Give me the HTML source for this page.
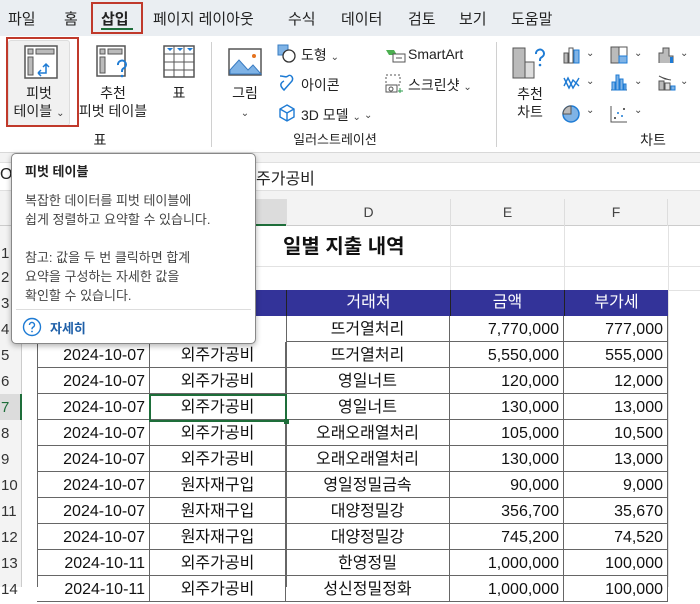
<!DOCTYPE html>
<html><head><meta charset="utf-8"><style>
*{box-sizing:border-box;margin:0;padding:0}
body{width:700px;height:587px;overflow:hidden;background:#fff;font-family:"Liberation Sans","Noto Sans CJK KR",sans-serif;position:relative;color:#222}
.a{position:absolute}
.tab{position:absolute;top:8px;font-size:15px;color:#222}
.rl{font-size:14px;color:#222;text-align:center;line-height:18px}
.rn{position:absolute;left:0;width:22px;font-size:15px;color:#333;text-align:left;padding-left:1px}
.c{position:absolute;font-size:16px;color:#111;white-space:nowrap;height:26px;line-height:28px;border-right:1px solid #666;border-bottom:1px solid #666}
.r{text-align:right;padding-right:4px}.m{text-align:center}
.dd{font-size:10px;color:#444}
</style></head><body>
<div class="a" style="left:0;top:0;width:700px;height:36px;background:#eaeef2"></div>
<div class="tab" style="left:8px">파일</div>
<div class="tab" style="left:64px">홈</div>
<div class="tab" style="left:101px;font-weight:bold">삽입</div>
<div class="a" style="left:91px;top:2px;width:52px;height:32px;border:2px solid #c0392b"></div>
<div class="a" style="left:101px;top:28px;width:32px;height:2px;background:#1e6e3a"></div>
<div class="tab" style="left:153px">페이지 레이아웃</div>
<div class="tab" style="left:288px">수식</div>
<div class="tab" style="left:341px">데이터</div>
<div class="tab" style="left:408px">검토</div>
<div class="tab" style="left:459px">보기</div>
<div class="tab" style="left:511px">도움말</div>
<div class="a" style="left:0;top:36px;width:700px;height:117px;background:#fff;border-bottom:1px solid #d8d8d8"></div>
<div class="a" style="left:8px;top:40px;width:62px;height:86px;background:#f1f1f1;border:1px solid #ddd;border-radius:3px"></div>
<svg class="a" style="left:24px;top:45px" width="34" height="34" viewBox="0 0 34 34"><rect x="1" y="1" width="32" height="32" fill="#fff" stroke="#555" stroke-width="1.5"/><rect x="4" y="4" width="5" height="5" fill="#bbb" stroke="#555"/><rect x="12" y="4" width="18" height="5" fill="#bbb" stroke="#555"/><rect x="4" y="12" width="5" height="18" fill="#bbb" stroke="#555"/><path d="M14 28h8v-9M19 22l3-3 3 3M14 28l3-3M14 28l3 3" stroke="#1e7bd4" stroke-width="1.5" fill="none"/></svg>
<div class="a rl" style="left:8px;top:84px;width:62px">피벗<br>테이블 <span class="dd">⌄</span></div>
<div class="a" style="left:6px;top:37px;width:73px;height:90px;border:2px solid #c0392b"></div>
<svg class="a" style="left:96px;top:45px" width="34" height="34" viewBox="0 0 34 34"><rect x="1" y="1" width="28" height="30" fill="#fff" stroke="#555" stroke-width="1.5"/><rect x="4" y="4" width="5" height="5" fill="#bbb" stroke="#555"/><rect x="12" y="4" width="14" height="5" fill="#bbb" stroke="#555"/><rect x="4" y="12" width="5" height="16" fill="#bbb" stroke="#555"/><path d="M22 20a4 4 0 1 1 6 3c-2 1-2 2-2 4" stroke="#1e7bd4" stroke-width="2" fill="none"/><circle cx="26" cy="31" r="1.3" fill="#1e7bd4"/></svg>
<div class="a rl" style="left:74px;top:84px;width:78px">추천<br>피벗 테이블</div>
<svg class="a" style="left:163px;top:45px" width="32" height="34" viewBox="0 0 32 34"><rect x="1" y="1" width="30" height="31" fill="#fff" stroke="#555" stroke-width="1.5"/><path d="M1 9h30M1 17h30M1 25h30M11 1v31M21 1v31" stroke="#555"/><path d="M4 3l3 3 3-3zM14 3l3 3 3-3zM24 3l3 3 3-3z" fill="#1e7bd4"/></svg>
<div class="a rl" style="left:165px;top:84px;width:28px">표</div>
<div class="a rl" style="left:0;top:131px;width:200px">표</div>
<div class="a" style="left:211px;top:42px;width:1px;height:105px;background:#d0d0d0"></div>
<svg class="a" style="left:228px;top:48px" width="34" height="28" viewBox="0 0 34 28"><rect x="1" y="1" width="32" height="26" fill="#fff" stroke="#555" stroke-width="1.5"/><path d="M2 22l9-10 9 10 5-5 8 9H2z" fill="#7fb3e6" stroke="#3a7cc2"/><circle cx="26" cy="8" r="2" fill="#e5731e"/></svg>
<div class="a rl" style="left:225px;top:84px;width:40px">그림<br><span class="dd">⌄</span></div>
<svg class="a" style="left:277px;top:44px" width="20" height="20"><rect x="1" y="1" width="10" height="10" fill="#7fb3e6" stroke="#3a7cc2"/><circle cx="12" cy="12" r="6" fill="#fff" stroke="#333" stroke-width="1.3"/></svg>
<div class="a" style="left:301px;top:45px;font-size:14px">도형 <span class="dd">⌄</span></div>
<svg class="a" style="left:277px;top:72px" width="20" height="20"><path d="M3 4c4 0 6 2 8 0s6 1 4 5l-8 9c-2-2-6-6 0-9" fill="none" stroke="#1e7bd4" stroke-width="1.5"/></svg>
<div class="a" style="left:301px;top:75px;font-size:14px">아이콘</div>
<svg class="a" style="left:278px;top:104px" width="18" height="18"><path d="M9 1l7 4v8l-7 4-7-4V5zM2 5l7 4 7-4M9 9v8" fill="none" stroke="#1e7bd4" stroke-width="1.4"/></svg>
<div class="a" style="left:301px;top:105px;font-size:14px">3D 모델 <span class="dd">⌄</span></div>
<svg class="a" style="left:385px;top:48px" width="22" height="16"><path d="M1 2h8l3 5H4z" fill="#4caf50"/><rect x="8" y="6" width="12" height="8" fill="#fff" stroke="#555"/><path d="M11 10h6" stroke="#555"/></svg>
<div class="a" style="left:408px;top:46px;font-size:14px">SmartArt</div>
<svg class="a" style="left:384px;top:74px" width="20" height="20"><rect x="2" y="1" width="14" height="10" fill="none" stroke="#555" stroke-dasharray="2 2"/><rect x="2" y="11" width="11" height="7" fill="#fff" stroke="#555"/><circle cx="7" cy="15" r="2" fill="none" stroke="#555"/><path d="M16 14v5M14 17h5" stroke="#2e9e4c"/></svg>
<div class="a" style="left:408px;top:75px;font-size:14px">스크린샷 <span class="dd">⌄</span></div>
<div class="a dd" style="left:364px;top:110px">⌄</div>
<div class="a rl" style="left:260px;top:131px;width:150px;font-size:13px">일러스트레이션</div>
<div class="a" style="left:496px;top:42px;width:1px;height:105px;background:#d0d0d0"></div>
<svg class="a" style="left:512px;top:46px" width="36" height="34"><rect x="1" y="2" width="12" height="30" fill="#bbb" stroke="#555"/><rect x="13" y="16" width="9" height="16" fill="#ddd" stroke="#555"/><path d="M24 8a4 4 0 1 1 6 3c-2 1-2 2-2 4" stroke="#1e7bd4" stroke-width="2" fill="none"/><circle cx="28" cy="19" r="1.3" fill="#1e7bd4"/></svg>
<div class="a rl" style="left:510px;top:85px;width:40px">추천<br>차트</div>
<svg class="a" style="left:562px;top:45px" width="20" height="20"><rect x="2" y="8" width="4" height="10" fill="#bbb" stroke="#555"/><rect x="7" y="3" width="4" height="15" fill="#fff" stroke="#555"/><rect x="12" y="5" width="5" height="13" fill="#7fb3e6" stroke="#1e7bd4"/></svg><div class="a dd" style="left:586px;top:48px">⌄</div>
<svg class="a" style="left:609px;top:45px" width="20" height="20"><rect x="2" y="2" width="16" height="16" fill="#fff" stroke="#555"/><rect x="2" y="2" width="8" height="16" fill="#bbb" stroke="#555"/><rect x="10" y="11" width="8" height="7" fill="#7fb3e6" stroke="#1e7bd4"/></svg><div class="a dd" style="left:634px;top:48px">⌄</div>
<svg class="a" style="left:657px;top:45px" width="20" height="20"><path d="M2 18V8h4V3h6v8h4v7" fill="#bbb" stroke="#555"/><rect x="13" y="12" width="3" height="6" fill="#1e7bd4"/></svg><div class="a dd" style="left:680px;top:48px">⌄</div>
<svg class="a" style="left:562px;top:72px" width="20" height="20"><path d="M2 14l4-8 5 10 6-10M2 6l5 10 4-8 6 6" fill="none" stroke="#1e7bd4" stroke-width="1.4"/></svg><div class="a dd" style="left:586px;top:76px">⌄</div>
<svg class="a" style="left:609px;top:72px" width="20" height="20"><path d="M2 18h16" stroke="#555"/><rect x="3" y="10" width="3" height="8" fill="#7fb3e6" stroke="#1e7bd4"/><rect x="7" y="3" width="3" height="15" fill="#7fb3e6" stroke="#1e7bd4"/><rect x="11" y="7" width="3" height="11" fill="#7fb3e6" stroke="#1e7bd4"/><rect x="15" y="12" width="2" height="6" fill="#7fb3e6" stroke="#1e7bd4"/></svg><div class="a dd" style="left:634px;top:76px">⌄</div>
<svg class="a" style="left:657px;top:72px" width="20" height="20"><path d="M2 4l6 3 6 1" stroke="#555"/><rect x="2" y="9" width="5" height="9" fill="#bbb" stroke="#555"/><rect x="8" y="11" width="5" height="7" fill="#ddd" stroke="#555"/><rect x="14" y="14" width="4" height="4" fill="#7fb3e6" stroke="#1e7bd4"/></svg><div class="a dd" style="left:680px;top:76px">⌄</div>
<svg class="a" style="left:561px;top:104px" width="20" height="20"><circle cx="10" cy="10" r="8" fill="#7fb3e6" stroke="#1e7bd4" stroke-width="1.5"/><path d="M10 10V2a8 8 0 0 0-8 8z" fill="#bbb" stroke="#555"/></svg><div class="a dd" style="left:586px;top:105px">⌄</div>
<svg class="a" style="left:609px;top:104px" width="20" height="20"><path d="M2 2v16h16" fill="none" stroke="#555"/><circle cx="6" cy="14" r="1" fill="#333"/><circle cx="9" cy="9" r="1" fill="#1e7bd4"/><circle cx="13" cy="12" r="1" fill="#1e7bd4"/><circle cx="15" cy="5" r="1" fill="#333"/></svg><div class="a dd" style="left:634px;top:105px">⌄</div>
<div class="a rl" style="left:635px;top:131px;width:36px">차트</div>
<div class="a" style="left:0;top:153px;width:700px;height:46px;background:#f3f3f3"></div>
<div class="a" style="left:0;top:162px;width:700px;height:29px;background:#fff;border-top:1px solid #e0e0e0;border-bottom:1px solid #e0e0e0"></div>
<div class="a" style="left:0;top:166px;font-size:16px">O</div>
<div class="a" style="left:256px;top:165px;font-size:16px">주가공비</div>
<div class="a" style="left:0;top:199px;width:700px;height:27px;background:#f3f3f3;border-bottom:1px solid #ccc"></div>
<div class="a" style="left:150px;top:199px;width:136px;height:27px;background:#dcdcdc;border-bottom:2px solid #1e6e3a"></div>
<div class="a" style="left:286px;top:199px;width:164px;height:27px;text-align:center;line-height:27px;font-size:14px;color:#444;border-left:1px solid #ddd">D</div>
<div class="a" style="left:450px;top:199px;width:114px;height:27px;text-align:center;line-height:27px;font-size:14px;color:#444;border-left:1px solid #ddd">E</div>
<div class="a" style="left:564px;top:199px;width:104px;height:27px;text-align:center;line-height:27px;font-size:14px;color:#444;border-left:1px solid #ddd;border-right:1px solid #ddd">F</div>
<div class="a" style="left:0;top:226px;width:22px;height:361px;background:#f3f3f3;border-right:1px solid #ccc"></div>
<div class="a" style="left:0;top:394px;width:22px;height:26px;background:#dcdcdc;border-right:2px solid #1e6e3a"></div>
<div class="a" style="left:22px;top:266px;width:678px;height:1px;background:#e2e2e2"></div>
<div class="a" style="left:22px;top:290px;width:678px;height:1px;background:#e2e2e2"></div>
<div class="a" style="left:450px;top:226px;width:1px;height:64px;background:#e2e2e2"></div>
<div class="a" style="left:564px;top:226px;width:1px;height:64px;background:#e2e2e2"></div>
<div class="a" style="left:668px;top:226px;width:1px;height:361px;background:#e2e2e2"></div>
<div class="a" style="left:283px;top:230px;font-size:20px;font-weight:bold;color:#111">일별 지출 내역</div>
<div class="rn" style="top:245px">1</div><div class="rn" style="top:269px">2</div><div class="rn" style="top:295px">3</div><div class="rn" style="top:321px">4</div>
<div class="rn" style="top:347px">5</div><div class="rn" style="top:373px">6</div><div class="rn" style="top:399px;color:#1e6e3a">7</div><div class="rn" style="top:425px">8</div><div class="rn" style="top:451px">9</div><div class="rn" style="top:477px">10</div><div class="rn" style="top:503px">11</div><div class="rn" style="top:529px">12</div><div class="rn" style="top:555px">13</div><div class="rn" style="top:581px">14</div>
<div class="a" style="left:37px;top:290px;width:631px;height:26px;background:#333399"></div>
<div class="a" style="left:286px;top:290px;width:164px;height:26px;line-height:26px;text-align:center;color:#fff;font-size:16px;border-left:1px solid #222">거래처</div>
<div class="a" style="left:450px;top:290px;width:114px;height:26px;line-height:26px;text-align:center;color:#fff;font-size:16px;border-left:1px solid #222">금액</div>
<div class="a" style="left:564px;top:290px;width:104px;height:26px;line-height:26px;text-align:center;color:#fff;font-size:16px;border-left:1px solid #222">부가세</div>
<div class="a" style="left:37px;top:316px;width:1px;height:271px;background:#666"></div>
<div class="a" style="left:286px;top:316px;width:1px;height:271px;background:#666"></div>
<div class="c r" style="left:37px;top:342px;width:113px">2024-10-07</div><div class="c m" style="left:150px;top:342px;width:136px">외주가공비</div>
<div class="c m" style="left:286px;top:316px;width:164px">뜨거열처리</div><div class="c r" style="left:450px;top:316px;width:114px">7,770,000</div><div class="c r" style="left:564px;top:316px;width:104px">777,000</div>
<div class="c m" style="left:286px;top:342px;width:164px">뜨거열처리</div><div class="c r" style="left:450px;top:342px;width:114px">5,550,000</div><div class="c r" style="left:564px;top:342px;width:104px">555,000</div>
<div class="c r" style="left:37px;top:368px;width:113px">2024-10-07</div><div class="c m" style="left:150px;top:368px;width:136px">외주가공비</div><div class="c m" style="left:286px;top:368px;width:164px">영일너트</div><div class="c r" style="left:450px;top:368px;width:114px">120,000</div><div class="c r" style="left:564px;top:368px;width:104px">12,000</div>
<div class="c r" style="left:37px;top:394px;width:113px">2024-10-07</div><div class="c m" style="left:150px;top:394px;width:136px">외주가공비</div><div class="c m" style="left:286px;top:394px;width:164px">영일너트</div><div class="c r" style="left:450px;top:394px;width:114px">130,000</div><div class="c r" style="left:564px;top:394px;width:104px">13,000</div>
<div class="c r" style="left:37px;top:420px;width:113px">2024-10-07</div><div class="c m" style="left:150px;top:420px;width:136px">외주가공비</div><div class="c m" style="left:286px;top:420px;width:164px">오래오래열처리</div><div class="c r" style="left:450px;top:420px;width:114px">105,000</div><div class="c r" style="left:564px;top:420px;width:104px">10,500</div>
<div class="c r" style="left:37px;top:446px;width:113px">2024-10-07</div><div class="c m" style="left:150px;top:446px;width:136px">외주가공비</div><div class="c m" style="left:286px;top:446px;width:164px">오래오래열처리</div><div class="c r" style="left:450px;top:446px;width:114px">130,000</div><div class="c r" style="left:564px;top:446px;width:104px">13,000</div>
<div class="c r" style="left:37px;top:472px;width:113px">2024-10-07</div><div class="c m" style="left:150px;top:472px;width:136px">원자재구입</div><div class="c m" style="left:286px;top:472px;width:164px">영일정밀금속</div><div class="c r" style="left:450px;top:472px;width:114px">90,000</div><div class="c r" style="left:564px;top:472px;width:104px">9,000</div>
<div class="c r" style="left:37px;top:498px;width:113px">2024-10-07</div><div class="c m" style="left:150px;top:498px;width:136px">원자재구입</div><div class="c m" style="left:286px;top:498px;width:164px">대양정밀강</div><div class="c r" style="left:450px;top:498px;width:114px">356,700</div><div class="c r" style="left:564px;top:498px;width:104px">35,670</div>
<div class="c r" style="left:37px;top:524px;width:113px">2024-10-07</div><div class="c m" style="left:150px;top:524px;width:136px">원자재구입</div><div class="c m" style="left:286px;top:524px;width:164px">대양정밀강</div><div class="c r" style="left:450px;top:524px;width:114px">745,200</div><div class="c r" style="left:564px;top:524px;width:104px">74,520</div>
<div class="c r" style="left:37px;top:550px;width:113px">2024-10-11</div><div class="c m" style="left:150px;top:550px;width:136px">외주가공비</div><div class="c m" style="left:286px;top:550px;width:164px">한영정밀</div><div class="c r" style="left:450px;top:550px;width:114px">1,000,000</div><div class="c r" style="left:564px;top:550px;width:104px">100,000</div>
<div class="c r" style="left:37px;top:576px;width:113px">2024-10-11</div><div class="c m" style="left:150px;top:576px;width:136px">외주가공비</div><div class="c m" style="left:286px;top:576px;width:164px">성신정밀정화</div><div class="c r" style="left:450px;top:576px;width:114px">1,000,000</div><div class="c r" style="left:564px;top:576px;width:104px">100,000</div>
<div class="a" style="left:149px;top:394px;width:138px;height:28px;border:2px solid #1e6e3a"></div>
<div class="a" style="left:284px;top:419px;width:5px;height:5px;background:#1e6e3a"></div>
<div class="a" style="left:11px;top:153px;width:245px;height:191px;background:#fff;border:1px solid #888;border-radius:5px;box-shadow:0 2px 6px rgba(0,0,0,.3)"></div>
<div class="a" style="left:25px;top:161px;font-size:13px;font-weight:bold;color:#222">피벗 테이블</div>
<div class="a" style="left:25px;top:191px;font-size:13px;line-height:19px;color:#444">복잡한 데이터를 피벗 테이블에<br>쉽게 정렬하고 요약할 수 있습니다.</div>
<div class="a" style="left:25px;top:248px;font-size:13px;line-height:19px;color:#444">참고: 값을 두 번 클릭하면 합계<br>요약을 구성하는 자세한 값을<br>확인할 수 있습니다.</div>
<div class="a" style="left:16px;top:309px;width:235px;height:1px;background:#ddd"></div>
<svg class="a" style="left:22px;top:317px" width="20" height="20"><circle cx="10" cy="10" r="8.5" fill="none" stroke="#1e7bd4" stroke-width="1.4"/><path d="M7.5 8a2.5 2.5 0 1 1 3.5 2.2c-1 .5-1 1-1 2" fill="none" stroke="#1e7bd4" stroke-width="1.4"/><circle cx="10" cy="14.5" r="0.9" fill="#1e7bd4"/></svg>
<div class="a" style="left:50px;top:318px;font-size:13px;font-weight:bold;color:#1e5fa8">자세히</div>
</body></html>
